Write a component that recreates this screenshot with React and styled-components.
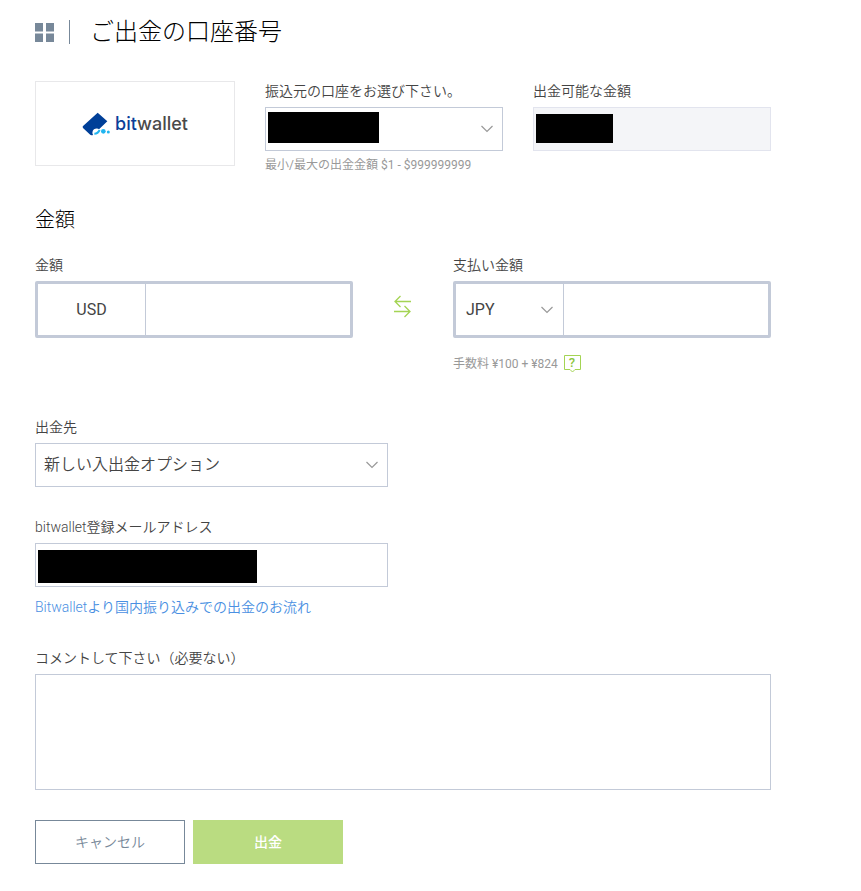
import styled, { createGlobalStyle } from "styled-components";

const GlobalStyle = createGlobalStyle`
  * {
    box-sizing: border-box;
  }

  body {
    margin: 0;
    background-color: #fff;
    color: #444;
    font-family: Roboto, "Noto Sans CJK JP", sans-serif;
    font-size: 14px;
    font-weight: 350;
    line-height: 20px;
  }

  button,
  input,
  select,
  textarea {
    margin: 0;
    font: inherit;
    color: inherit;
    border-radius: 0;
    outline: none;
  }
`;

const Page = styled.main`
  padding: 16px 90px 27px 35px;
`;

const Header = styled.header`
  display: flex;
  align-items: center;
  height: 32px;
  margin-bottom: 33px;
`;

const MenuButton = styled.button`
  display: flex;
  align-items: center;
  height: 24px;
  padding: 0 15px 0 0;
  border: 0;
  border-right: 1px solid #778899;
  background: none;
`;

const Title = styled.h1`
  margin: 0 0 0 20px;
  color: #000;
  font-size: 24px;
  font-weight: 300;
  line-height: 30px;
`;

const AccountRow = styled.section`
  display: grid;
  grid-template-columns: 200px 1fr 1fr;
  align-items: start;
  gap: 30px;
`;

const Logo = styled.div`
  display: flex;
  align-items: center;
  justify-content: center;
  gap: 5px;
  height: 85px;
  border: 1px solid #e8e8ea;
  color: #4a4a4a;
  font-family: Inter, sans-serif;
  font-size: 18px;
  font-weight: 500;
`;

const LogoBlue = styled.span`
  color: #0b3f99;
`;

const Field = styled.div`
  display: flex;
  flex-direction: column;
  min-width: 0;
  width: ${(props) => (props.$half ? "48%" : "auto")};
  margin-top: ${(props) => props.$top || 0}px;
`;

const Label = styled.label`
  margin-bottom: 6px;
`;

const Hint = styled.p`
  display: flex;
  align-items: center;
  gap: 5px;
  margin: ${(props) => props.$top}px 0 0;
  color: #999;
  font-size: 12px;
  font-weight: 400;
`;

const Control = styled.div`
  position: relative;
  display: grid;
  align-items: center;
  height: ${(props) => (props.$fill ? "100%" : "44px")};
`;

const Input = styled.input`
  width: 100%;
  height: 44px;
  padding: 0 8px;
  border: 1px solid #c3cad8;
  background-color: #fff;
  font-size: 16px;

  &:disabled {
    border-color: #e2e4ee;
    background-color: #f4f5f8;
  }
`;

const Select = styled.select`
  grid-area: 1 / 1;
  width: 100%;
  height: 100%;
  padding: 0 30px 0 ${(props) => (props.$plain ? 10 : 8)}px;
  border: ${(props) => (props.$plain ? "0" : "1px solid #c3cad8")};
  background-color: #fff;
  font-size: 16px;
  appearance: none;
`;

const Arrow = styled.svg`
  grid-area: 1 / 1;
  justify-self: end;
  margin-right: 10px;
  pointer-events: none;
`;

const Redacted = styled.span`
  position: absolute;
  top: ${(props) => props.$top}px;
  left: 3px;
  width: ${(props) => props.$width}px;
  height: ${(props) => props.$height}px;
  background-color: #000;
`;

const Subtitle = styled.h2`
  margin: 32px 0 22px;
  color: #000;
  font-size: 20px;
  font-weight: 300;
  line-height: 26px;
`;

const AmountRow = styled.section`
  display: grid;
  grid-template-columns: 1fr 100px 1fr;
  align-items: start;
`;

const AmountBox = styled.div`
  display: grid;
  grid-template-columns: 108px 1fr;
  height: 57px;
  border: 3px solid #c3cad8;
  border-radius: 2px;
`;

const Currency = styled.div`
  display: flex;
  flex-direction: column;
  justify-content: center;
  border-right: 1px solid #c3cad8;
  font-size: 16px;
  font-weight: 400;
  text-align: center;
`;

const AmountInput = styled.input`
  width: 100%;
  min-width: 0;
  padding: 0 10px;
  border: 0;
  background: none;
  font-size: 16px;
`;

const SwapButton = styled.button`
  justify-self: center;
  display: flex;
  margin-top: 39px;
  padding: 0;
  border: 0;
  background: none;
`;

const HelpButton = styled.button`
  display: flex;
  padding: 0;
  border: 0;
  background: none;
`;

const HelpLink = styled.a`
  align-self: flex-start;
  margin-top: 10px;
  color: #4a90e2;
  text-decoration: none;
`;

const Comment = styled.textarea`
  width: 100%;
  height: 116px;
  padding: 8px;
  border: 1px solid #c3cad8;
  resize: none;
`;

const Actions = styled.div`
  display: flex;
  gap: 8px;
  margin-top: 30px;
`;

const Button = styled.button`
  width: 150px;
  height: 44px;
  border: 1px solid ${(props) => (props.$primary ? "#badc81" : "#778899")};
  background-color: ${(props) => (props.$primary ? "#badc81" : "#fff")};
  color: ${(props) => (props.$primary ? "#fff" : "#778899")};
  font-weight: ${(props) => (props.$primary ? 500 : 350)};
`;

function Chevron() {
  return (
    <Arrow width="12" height="8" viewBox="0 0 12 8" fill="none">
      <path d="M0.5 1L6 6.5L11.5 1" stroke="#999" strokeWidth="1.2" />
    </Arrow>
  );
}

function App() {
  return (
    <>
      <GlobalStyle />
      <Page>
        <Header>
          <MenuButton type="button" aria-label="メニュー">
            <svg width="19" height="19" viewBox="0 0 19 19" fill="#778899">
              <rect width="8" height="8.5" />
              <rect x="11" width="8" height="8.5" />
              <rect y="10.5" width="8" height="8.5" />
              <rect x="11" y="10.5" width="8" height="8.5" />
            </svg>
          </MenuButton>
          <Title>ご出金の口座番号</Title>
        </Header>

        <AccountRow>
          <Logo>
            <svg width="28" height="24" viewBox="0 0 84 72">
              <path
                d="M47 2L76 28L34 68Q28 72 23 67L3 48Q0 44 4 41Z"
                fill="#003f98"
              />
              <path d="M34 70A11 11 0 1 1 54 54L54 72H34Z" fill="#fff" />
              <path
                d="M37 65Q48 65 53 54"
                fill="none"
                stroke="#21b5f0"
                strokeWidth="6"
              />
              <circle cx="64" cy="58" r="7" fill="#21b5f0" />
              <circle cx="79" cy="60" r="4.5" fill="#21b5f0" />
            </svg>
            <span>
              <LogoBlue>bit</LogoBlue>wallet
            </span>
          </Logo>
          <Field>
            <Label htmlFor="account">振込元の口座をお選び下さい。</Label>
            <Control>
              <Select id="account">
                <option></option>
              </Select>
              <Chevron />
              <Redacted $top={5} $width={111} $height={31} />
            </Control>
            <Hint $top={4}>最小/最大の出金金額 $1 - $999999999</Hint>
          </Field>
          <Field>
            <Label htmlFor="available">出金可能な金額</Label>
            <Control>
              <Input id="available" disabled />
              <Redacted $top={7} $width={77} $height={29} />
            </Control>
          </Field>
        </AccountRow>

        <Subtitle>金額</Subtitle>

        <AmountRow>
          <Field>
            <Label htmlFor="amount">金額</Label>
            <AmountBox>
              <Currency>USD</Currency>
              <AmountInput id="amount" type="text" />
            </AmountBox>
          </Field>
          <SwapButton type="button" aria-label="通貨を入れ替える">
            <svg
              width="18"
              height="24"
              viewBox="0 0 18 24"
              fill="none"
              stroke="#a4d454"
              strokeWidth="1.3"
            >
              <path d="M17 7.5H1M6.5 2L1 7.5L6.5 13" />
              <path d="M0 17.5H16M10.5 12L16 17.5L10.5 23" />
            </svg>
          </SwapButton>
          <Field>
            <Label htmlFor="payment">支払い金額</Label>
            <AmountBox>
              <Currency>
                <Control $fill>
                  <Select $plain aria-label="通貨" defaultValue="JPY">
                    <option>JPY</option>
                    <option>USD</option>
                  </Select>
                  <Chevron />
                </Control>
              </Currency>
              <AmountInput id="payment" type="text" />
            </AmountBox>
            <Hint $top={16}>
              手数料 ¥100 + ¥824
              <HelpButton type="button" aria-label="手数料について">
                <svg width="18" height="18" viewBox="0 0 18 18">
                  <path
                    d="M1.5 0.5H17.5V14.5H12L9.5 17L7 14.5H1.5Z"
                    fill="none"
                    stroke="#a4d454"
                  />
                  <text
                    x="9"
                    y="12"
                    fill="#8cc63f"
                    fontSize="13"
                    fontWeight="500"
                    textAnchor="middle"
                  >
                    ?
                  </text>
                </svg>
              </HelpButton>
            </Hint>
          </Field>
        </AmountRow>

        <Field $half $top={43}>
          <Label htmlFor="destination">出金先</Label>
          <Control>
            <Select id="destination">
              <option>新しい入出金オプション</option>
            </Select>
            <Chevron />
          </Control>
        </Field>

        <Field $half $top={30}>
          <Label htmlFor="email">bitwallet登録メールアドレス</Label>
          <Control>
            <Input id="email" type="email" />
            <Redacted $top={7} $width={219} $height={33} />
          </Control>
          <HelpLink href="#">
            Bitwalletより国内振り込みでの出金のお流れ
          </HelpLink>
        </Field>

        <Field $top={31}>
          <Label htmlFor="comment">コメントして下さい（必要ない）</Label>
          <Comment id="comment" />
        </Field>

        <Actions>
          <Button type="button">キャンセル</Button>
          <Button type="submit" $primary>
            出金
          </Button>
        </Actions>
      </Page>
    </>
  );
}

export default App;
